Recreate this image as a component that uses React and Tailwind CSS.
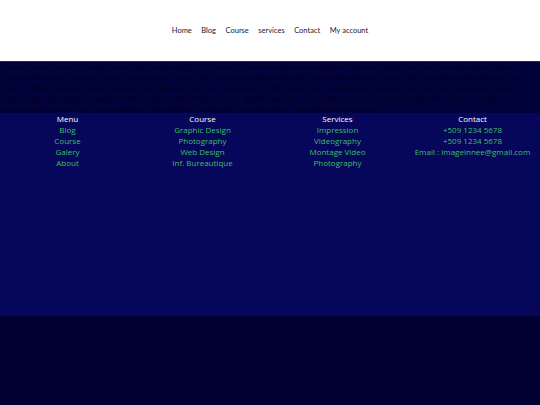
export default function App() {
  const cols = [
    { title: "Menu", items: ["Blog", "Course", "Galery", "About"] },
    { title: "Course", items: ["Graphic Design", "Photography", "Web Design", "Inf. Bureautique"] },
    { title: "Services", items: ["Impression", "Videography", "Montage Video", "Photography"] },
    { title: "Contact", items: ["+509 1234 5678", "+509 1234 5678", "Email : imageinnee@gmail.com"] },
  ];
  const nav = ["Home", "Blog", "Course", "services", "Contact", "My account"];
  return (
    <div className="min-h-[405px] bg-[#000033] flex flex-col" style={{ fontFamily: "Lato, 'Open Sans', sans-serif" }}>
      <header className="h-[61px] bg-white flex items-center justify-center">
        <nav className="flex gap-[9.5px] text-[7.5px] text-[#222233]">
          {nav.map((n) => (
            <span key={n}>{n}</span>
          ))}
        </nav>
      </header>
      <section className="h-[52px] bg-[#02023b] border-t border-[#2a2a60] px-[2px] overflow-hidden">
        <p className="text-[8px] leading-[10.4px] text-[#00001c]" style={{ fontFamily: "'Open Sans', sans-serif" }}>
          Lorem ipsum dolor sit amet consectetur adipisicing elit. Similique, necessitatibus voluptatem dolorum quae sit nobis consequuntur eaque, minima laborum cumque rerum. Quis earum, rerum nihil incidunt fugiat sapiente libero blanditiis odit quos nisi voluptas quasi dolorem, at quam officia maxime eveniet accusamus eligendi eius rem laudantium odio aspernatur nulla animi. Dolores rem suscipit voluptatum unde natus explicabo fugit voluptatem distinctio facilis pariatur soluta debitis quia illum veritatis quis sequi placeat ullam dicta nemo corporis doloribus tempore iste. Necessitatibus voluptatibus fugiat sint reprehenderit cupiditate minus tenetur.
        </p>
      </section>
      <footer className="h-[203px] bg-[#06065a] grid grid-cols-4 text-center text-[8px] leading-[11px]" style={{ fontFamily: "'Open Sans', sans-serif" }}>
        {cols.map((c) => (
          <div key={c.title} className="flex flex-col items-center">
            <div className="text-white">{c.title}</div>
            {c.items.map((i, k) => (
              <div key={k} className="text-[#3fbf6a]">{i}</div>
            ))}
          </div>
        ))}
      </footer>
      <div className="flex-1 bg-[#000033]"></div>
    </div>
  );
}
